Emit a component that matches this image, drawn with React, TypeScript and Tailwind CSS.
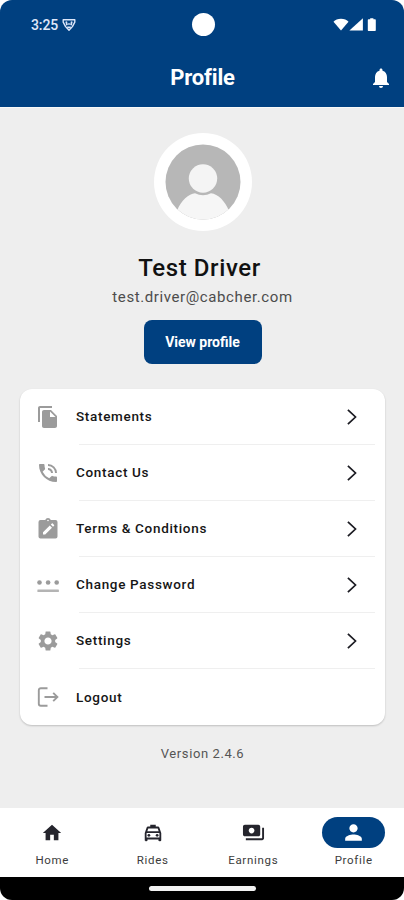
import { ReactNode } from 'react';
import {
  MdFileCopy,
  MdHome,
  MdNotifications,
  MdOutlineLocalTaxi,
  MdPayments,
  MdPerson,
  MdPhoneInTalk,
  MdSettings,
} from 'react-icons/md';

function ClipboardEditIcon() {
  return (
    <svg viewBox="0 0 24 24" className="w-6 h-6" fill="currentColor">
      <path
        fillRule="evenodd"
        d="M19.500 3h-4.700a3 3 0 0 0-5.600 0H4.500a2 2 0 0 0-2 2v14.500c0 1.100.9 2 2 2h15a2 2 0 0 0 2-2V5a2 2 0 0 0-2-2Zm-7.500-.3a.8.8 0 1 1 0 1.600.8.8 0 0 1 0-1.600ZM7 17.500v-2.200l6.800-6.800 2.200 2.200L9.200 17.500H7Zm10-7.700-2.200-2.200 1.100-1.100c.2-.2.6-.2.8 0l1.400 1.400c.2.2.2.6 0 .8L17 9.800Z"
      />
    </svg>
  );
}

function PasswordIcon() {
  return (
    <svg viewBox="0 0 24 16" className="w-6 h-4" fill="currentColor">
      <circle cx="3.500" cy="5.500" r="2.300" />
      <circle cx="12.100" cy="5.500" r="2.300" />
      <circle cx="20.700" cy="5.500" r="2.300" />
      <rect x="1.400" y="12.500" width="21.500" height="2.400" rx=".5" opacity=".75" />
    </svg>
  );
}

function LogoutIcon() {
  return (
    <svg
      viewBox="0 0 24 24"
      className="w-6 h-6"
      fill="none"
      stroke="currentColor"
      strokeWidth="1.900"
    >
      <path d="M11.500 3.200H4.800a2 2 0 0 0-2 2v13.600a2 2 0 0 0 2 2h6.700M8.500 12h12.700M17.200 7.800l4.200 4.200-4.200 4.200" />
    </svg>
  );
}

function ChevronIcon() {
  return (
    <svg
      viewBox="0 0 10 16"
      className="w-[10px] h-4"
      fill="none"
      stroke="#1b1b22"
      strokeWidth="1.700"
    >
      <path d="M.9 .8 8.500 8l-7.600 7.200" />
    </svg>
  );
}

function StatusBar() {
  return (
    <div className="h-[48px] pl-[31px] pr-[27px] grid grid-cols-[1fr_auto_1fr] items-center">
      <div className="flex items-center gap-1 pt-[2px]">
        <span className="text-[14px] leading-4 tracking-[-0.1px] font-medium text-[#e0e8fa]">
          3:25
        </span>
        <svg viewBox="0 0 14 14" className="w-[14px] h-[14px]" fill="none">
          <path
            d="M1.200 1.700h11.600v2.500l-2.400 4.400L7 12.300 3.600 8.600 1.200 4.200V1.700Z"
            stroke="#dce6fa"
            strokeWidth="1.400"
            strokeLinejoin="round"
          />
          <path
            d="M4.200 3.500 5 7.300M9.800 3.500 9 7.300M7 5.200v1.600M5.200 9.300h3.600"
            stroke="#dce6fa"
            strokeWidth="1.700"
          />
        </svg>
      </div>
      <div className="size-[23px] -ml-[2px] rounded-full bg-white" />
      <svg
        viewBox="0 0 44 14"
        className="w-[44px] h-[14px] mt-[1px] justify-self-end"
        fill="currentColor"
      >
        <path d="M.5 3.800C3.500-.2 12.500-.2 15.500 3.800L8 12.600Z" />
        <path d="M29.900 .3v12.300H16.400Z" />
        <path d="M37.200 1.300V.2h3.200v1.100h1.400c.6 0 1 .4 1 1v9.800c0 .6-.4 1-1 1h-6c-.6 0-1-.4-1-1V2.300c0-.6.4-1 1-1Z" />
      </svg>
    </div>
  );
}

function Avatar() {
  return (
    <div className="size-[98px] rounded-full bg-white flex items-center justify-center">
      <svg viewBox="0 0 76 76" className="size-[76px]">
        <defs>
          <clipPath id="avatar">
            <circle cx="38" cy="38" r="37.500" />
          </clipPath>
        </defs>
        <g clipPath="url(#avatar)">
          <rect width="76" height="76" fill="#b7b7b7" />
          <circle cx="38" cy="34.500" r="14.200" fill="#f4f4f4" />
          <path
            d="M12 67C16 56 24 50 30 49.300Q38 53 46 49.300C53 50 60 57 64 67V76H12Z"
            fill="#f6f6f6"
          />
        </g>
      </svg>
    </div>
  );
}

const menu: { label: string; icon: ReactNode; arrow: boolean }[] = [
  { label: 'Statements', icon: <MdFileCopy size={24} />, arrow: true },
  { label: 'Contact Us', icon: <MdPhoneInTalk size={24} />, arrow: true },
  { label: 'Terms & Conditions', icon: <ClipboardEditIcon />, arrow: true },
  { label: 'Change Password', icon: <PasswordIcon />, arrow: true },
  { label: 'Settings', icon: <MdSettings size={24} />, arrow: true },
  { label: 'Logout', icon: <LogoutIcon />, arrow: false },
];

const tabs = [
  { label: 'Home', icon: <MdHome size={22} />, active: false },
  { label: 'Rides', icon: <MdOutlineLocalTaxi size={22} />, active: false },
  { label: 'Earnings', icon: <MdPayments size={23} />, active: false },
  { label: 'Profile', icon: <MdPerson size={25} />, active: true },
];

export default function App() {
  return (
    <div className="w-[404px] h-[900px] bg-white font-[Roboto,sans-serif]">
      <div className="h-full flex flex-col rounded-[12px] overflow-hidden bg-[#eeeeee]">
        <header className="h-[107px] shrink-0 bg-[#004080] text-white">
          <StatusBar />
          <div className="h-[58px] grid grid-cols-[1fr_auto_1fr] items-center pr-[11px]">
            <span />
            <h1 className="text-[22px] font-bold tracking-[-0.15px] pl-[12px]">
              Profile
            </h1>
            <MdNotifications size={24} className="mt-[2px] justify-self-end" />
          </div>
        </header>

        <main className="grow flex flex-col items-center pt-[25px] pl-px border-t border-[#f8f8f8]">
          <Avatar />
          <h2 className="mt-[21px] mr-[6px] text-[24px] leading-8 font-medium tracking-[0.6px] text-[#111]">
            Test Driver
          </h2>
          <p className="mt-[3px] text-[15px] leading-5 tracking-[0.6px] text-[#4c4c4c]">
            test.driver@cabcher.com
          </p>
          <button className="mt-[13px] w-[118px] h-[44px] rounded-[8px] bg-[#004080] text-white text-[14px] font-bold">
            View profile
          </button>

          <ul className="mt-[25px] w-[365px] rounded-[12px] bg-white shadow-[0_1px_2px_rgba(0,0,0,0.2)]">
            {menu.map((item, i) => (
              <li key={item.label} className="h-[56px] flex">
                <div className="w-[56px] shrink-0 flex items-center justify-center text-[#9b9b9b]">
                  {item.icon}
                </div>
                <div className="grow mr-[10px] flex flex-col">
                  <div className="grow flex items-center justify-between">
                    <span className="text-[13.5px] font-medium tracking-[0.68px] text-[#161616]">
                      {item.label}
                    </span>
                    {item.arrow && (
                      <span className="mr-[18px]">
                        <ChevronIcon />
                      </span>
                    )}
                  </div>
                  {i < menu.length - 1 && (
                    <hr className="ml-[3px] border-[#efefef]" />
                  )}
                </div>
              </li>
            ))}
          </ul>
          <p className="mt-[19px] text-[13px] leading-5 tracking-[0.6px] text-[#555]">
            Version 2.4.6
          </p>
        </main>

        <nav className="h-[69px] shrink-0 bg-white grid grid-cols-4 pl-[2px]">
          {tabs.map((tab) => (
            <div key={tab.label} className="flex flex-col items-center pt-[9px]">
              <div
                className={`w-[63px] h-[31px] rounded-full flex items-center justify-center ${
                  tab.active ? 'bg-[#004080] text-white' : 'text-[#25252d]'
                }`}
              >
                {tab.icon}
              </div>
              <span className="mt-[4px] text-[11.5px] leading-4 tracking-[0.7px] text-[#3c3c3c]">
                {tab.label}
              </span>
            </div>
          ))}
        </nav>
        <div className="h-[23px] shrink-0 bg-black flex justify-center items-center">
          <div className="w-[107px] h-[5px] rounded-full bg-[#f2f2f2]" />
        </div>
      </div>
    </div>
  );
}
